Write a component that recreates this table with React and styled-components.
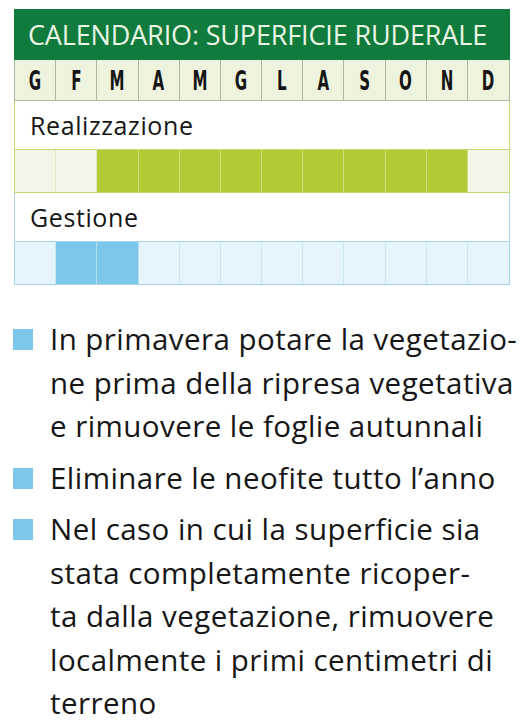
import styled, { createGlobalStyle } from "styled-components";

const months = ["G", "F", "M", "A", "M", "G", "L", "A", "S", "O", "N", "D"];

const realizzazione = [0, 0, 1, 1, 1, 1, 1, 1, 1, 1, 1, 0];
const gestione = [0, 1, 1, 0, 0, 0, 0, 0, 0, 0, 0, 0];

const notes = [
  [
    "In primavera potare la vegetazio-",
    "ne prima della ripresa vegetativa",
    "e rimuovere le foglie autunnali",
  ],
  ["Eliminare le neofite tutto l\u2019anno"],
  [
    "Nel caso in cui la superficie sia",
    "stata completamente ricoper-",
    "ta dalla vegetazione, rimuovere",
    "localmente i primi centimetri di",
    "terreno",
  ],
];

const palette = {
  green: {
    border: "#c9d874",
    on: "#b3c935",
    off: "#f3f6e7",
    lineOn: "#cfdd7c",
    lineOff: "#dfe6c6",
  },
  blue: {
    border: "#a6d4ea",
    on: "#7dc8ea",
    off: "#e6f4fb",
    lineOn: "#b5def1",
    lineOff: "#c9e5f2",
  },
};

const GlobalStyle = createGlobalStyle`
  body {
    margin: 0;
    background: #fff;
    font-family: "Open Sans", "Noto Sans", sans-serif;
  }
`;

const Page = styled.div`
  width: 530px;
  padding: 9px 0 0 14px;
  box-sizing: border-box;
`;

const Table = styled.div`
  width: 496px;
`;

const Header = styled.div`
  height: 51px;
  background: #117b3d;
  color: #e9f6e4;
  display: flex;
  align-items: center;
  padding-left: 14px;
  font-size: 27px;
  letter-spacing: -0.15px;
  white-space: nowrap;
`;

const MonthRow = styled.div`
  display: grid;
  grid-template-columns: repeat(12, 1fr);
  height: 41px;
  background: #eef3dd;
  border-left: 1px solid #a9bca2;
  border-right: 1px solid #a9bca2;
  border-bottom: 1px solid #a9bca2;
  box-sizing: border-box;
`;

const Month = styled.div`
  display: flex;
  align-items: center;
  justify-content: center;
  border-right: 1px solid #a9bca2;
  &:last-child {
    border-right: none;
  }
  span {
    display: inline-block;
    font-family: "DejaVu Sans Condensed", "DejaVu Sans", sans-serif;
    font-weight: bold;
    font-size: 27px;
    color: #151515;
    transform: scaleX(0.62);
  }
`;

const Section = styled.div`
  border: 1.5px solid ${(p) => palette[p.$tone].border};
  border-top: none;
`;

const Label = styled.div`
  height: 48px;
  display: flex;
  align-items: center;
  padding-left: 15px;
  font-size: 25px;
  letter-spacing: 0.6px;
  color: #161616;
  background: #fff;
`;

const Bar = styled.div`
  display: grid;
  grid-template-columns: repeat(12, 1fr);
  height: 42px;
  border-top: 1.5px solid ${(p) => palette[p.$tone].border};
`;

const Slot = styled.div`
  background: ${(p) => (p.$on ? palette[p.$tone].on : palette[p.$tone].off)};
  border-right: 1px solid
    ${(p) => (p.$on ? palette[p.$tone].lineOn : palette[p.$tone].lineOff)};
  &:last-child {
    border-right: none;
  }
`;

const Notes = styled.ul`
  list-style: none;
  margin: 32px 0 0 -1px;
  padding: 0;
`;

const Note = styled.li`
  display: flex;
  gap: 17px;
  font-size: 29.5px;
  letter-spacing: 0.45px;
  line-height: 43.5px;
  color: #161616;
  margin-bottom: 8px;
  white-space: nowrap;
`;

const Square = styled.span`
  flex: none;
  width: 20px;
  height: 21px;
  margin-top: 12px;
  background: #7dc8ea;
`;

const Lines = styled.div`
  display: flex;
  flex-direction: column;
`;

const Schedule = ({ title, tone, data }) => (
  <Section $tone={tone}>
    <Label>{title}</Label>
    <Bar $tone={tone}>
      {data.map((on, i) => (
        <Slot key={i} $tone={tone} $on={!!on} />
      ))}
    </Bar>
  </Section>
);

export default function App() {
  return (
    <Page>
      <GlobalStyle />
      <Table>
        <Header>CALENDARIO: SUPERFICIE RUDERALE</Header>
        <MonthRow>
          {months.map((m, i) => (
            <Month key={i}>
              <span>{m}</span>
            </Month>
          ))}
        </MonthRow>
        <Schedule title="Realizzazione" tone="green" data={realizzazione} />
        <Schedule title="Gestione" tone="blue" data={gestione} />
      </Table>
      <Notes>
        {notes.map((lines, i) => (
          <Note key={i}>
            <Square />
            <Lines>
              {lines.map((l, j) => (
                <span key={j}>{l}</span>
              ))}
            </Lines>
          </Note>
        ))}
      </Notes>
    </Page>
  );
}
